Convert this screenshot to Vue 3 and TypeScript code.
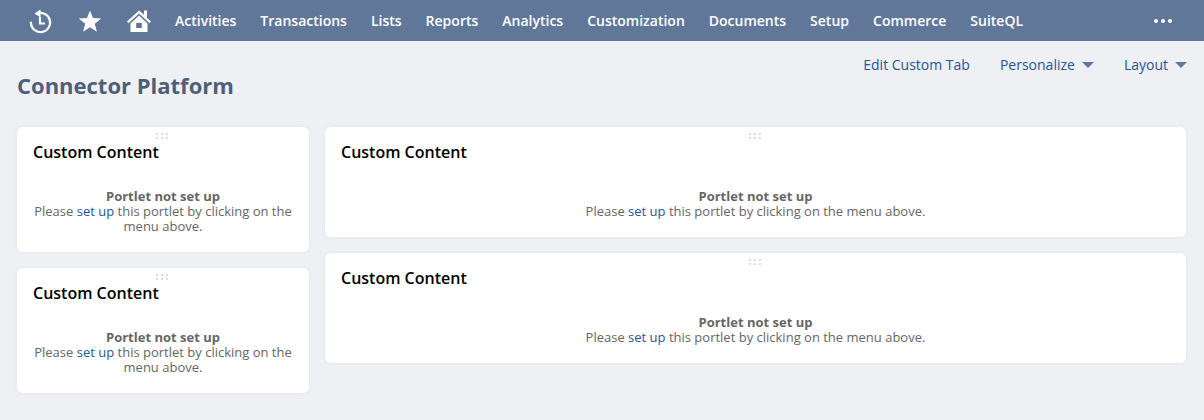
<script setup lang="ts">
const navItems: string[] = ['Activities','Transactions','Lists','Reports','Analytics','Customization','Documents','Setup','Commerce','SuiteQL']
const dots: number[] = [0,1,2,3,4,5]
</script>

<template>
  <div class="page">
    <nav class="nav">
      <svg class="ico" width="26" height="26" viewBox="0 0 26 26" fill="none" stroke="#fff" stroke-width="2.2">
        <path d="M9.5 5.8A9.6 9.6 0 1 1 3.9 14.5" stroke-linecap="round"/>
        <path d="M13 9v6.5h5" stroke-width="2.2"/>
        <path d="M13.5 1.5 7.6 5.6l5.9 4z" fill="#fff" stroke="none"/>
      </svg>
      <svg class="ico star" width="24" height="24" viewBox="0 0 24 24" fill="#fff">
        <path d="M12 1.5l3 7.6 8.2.5-6.4 5.2 2.1 8-6.9-4.5-6.9 4.5 2.1-8L.8 9.6 9 9.1z"/>
      </svg>
      <svg class="ico home" width="26" height="24" viewBox="0 0 26 24" fill="#fff">
        <path d="M13 1.5 1 12.6l1.4 1.6L13 4.5l10.6 9.7 1.4-1.6-4-3.7V1.5h-3v4.2z"/>
        <path fill-rule="evenodd" d="M13 6.6 4.5 14.4V23h17v-8.6zM10.2 14h5.6v5h-5.6z"/>
      </svg>
      <div class="items">
        <a v-for="item in navItems" :key="item" class="item">{{ item }}</a>
      </div>
      <div class="more"><i></i><i></i><i></i></div>
    </nav>

    <header class="head">
      <h1>Connector Platform</h1>
      <div class="actions">
        <a>Edit Custom Tab</a>
        <a>Personalize<span class="caret"></span></a>
        <a>Layout<span class="caret"></span></a>
      </div>
    </header>

    <main class="cols">
      <div class="col left">
        <section v-for="n in 2" :key="n" class="card tall">
          <div class="grip"><b v-for="d in dots" :key="d"></b></div>
          <h2>Custom Content</h2>
          <div class="msg">
            <strong>Portlet not set up</strong>
            <p>Please <a>set up</a> this portlet by clicking on the menu above.</p>
          </div>
        </section>
      </div>
      <div class="col right">
        <section v-for="n in 2" :key="n" class="card">
          <div class="grip"><b v-for="d in dots" :key="d"></b></div>
          <h2>Custom Content</h2>
          <div class="msg">
            <strong>Portlet not set up</strong>
            <p>Please <a>set up</a> this portlet by clicking on the menu above.</p>
          </div>
        </section>
      </div>
    </main>
  </div>
</template>

<style>
html, body { margin: 0; background: #eff0f4; }
</style>

<style scoped>
.page {
  width: 1204px;
  height: 420px;
  overflow: hidden;
  background: #eff0f4;
  font-family: "Open Sans", "Liberation Sans", sans-serif;
}
.nav {
  height: 41px;
  background: #607799;
  display: flex;
  align-items: center;
  color: #fff;
  padding-left: 27px;
  box-sizing: border-box;
}
.ico { flex: none; }
.star { margin-left: 25px; }
.home { margin-left: 24px; }
.items {
  display: flex;
  gap: 24px;
  margin-left: 23px;
  font-size: 14px;
  font-weight: 600;
  line-height: 41px;
}
.more {
  display: flex;
  gap: 3px;
  position: absolute;
  left: 1154px;
  top: 19px;
}
.more i {
  width: 4px;
  height: 4px;
  border-radius: 50%;
  background: #fff;
}
.head {
  display: flex;
  justify-content: space-between;
  height: 86px;
  box-sizing: border-box;
  padding: 0 17px;
}
h1 {
  margin: 30px 0 0;
  font-size: 22px;
  line-height: 28px;
  font-weight: 700;
  color: #4d5f79;
}
.actions {
  display: flex;
  gap: 30px;
  margin-top: 14px;
  font-size: 14px;
  line-height: 20px;
  color: #255599;
}
.caret {
  display: inline-block;
  width: 0;
  height: 0;
  margin-left: 7px;
  vertical-align: 2px;
  border-left: 6px solid transparent;
  border-right: 6px solid transparent;
  border-top: 6px solid #607799;
}
.cols {
  display: flex;
  gap: 16px;
  padding: 0 18px 0 17px;
}
.col {
  display: flex;
  flex-direction: column;
  gap: 16px;
}
.left { width: 292px; flex: none; }
.right { flex: 1; }
.card {
  position: relative;
  height: 110px;
  background: #fff;
  border-radius: 6px;
  box-shadow: 0 0 5px rgba(0, 0, 0, 0.05);
  box-sizing: border-box;
  padding: 14px 16px 0;
}
.tall { height: 125px; }
.grip {
  position: absolute;
  top: 6px;
  left: 50%;
  margin-left: -7px;
  display: grid;
  grid-template-columns: repeat(3, 2px);
  gap: 2px 3px;
}
.grip b {
  width: 2px;
  height: 2px;
  background: #dcdcdc;
}
h2 {
  margin: 0;
  font-size: 16px;
  line-height: 22px;
  font-weight: 600;
  color: #000;
}
.msg {
  margin-top: 26px;
  text-align: center;
  font-size: 13px;
  line-height: 15px;
  color: #666;
}
.msg strong {
  display: block;
  font-weight: 700;
}
.msg p { margin: 0; }
.msg a { color: #255599; }
</style>
